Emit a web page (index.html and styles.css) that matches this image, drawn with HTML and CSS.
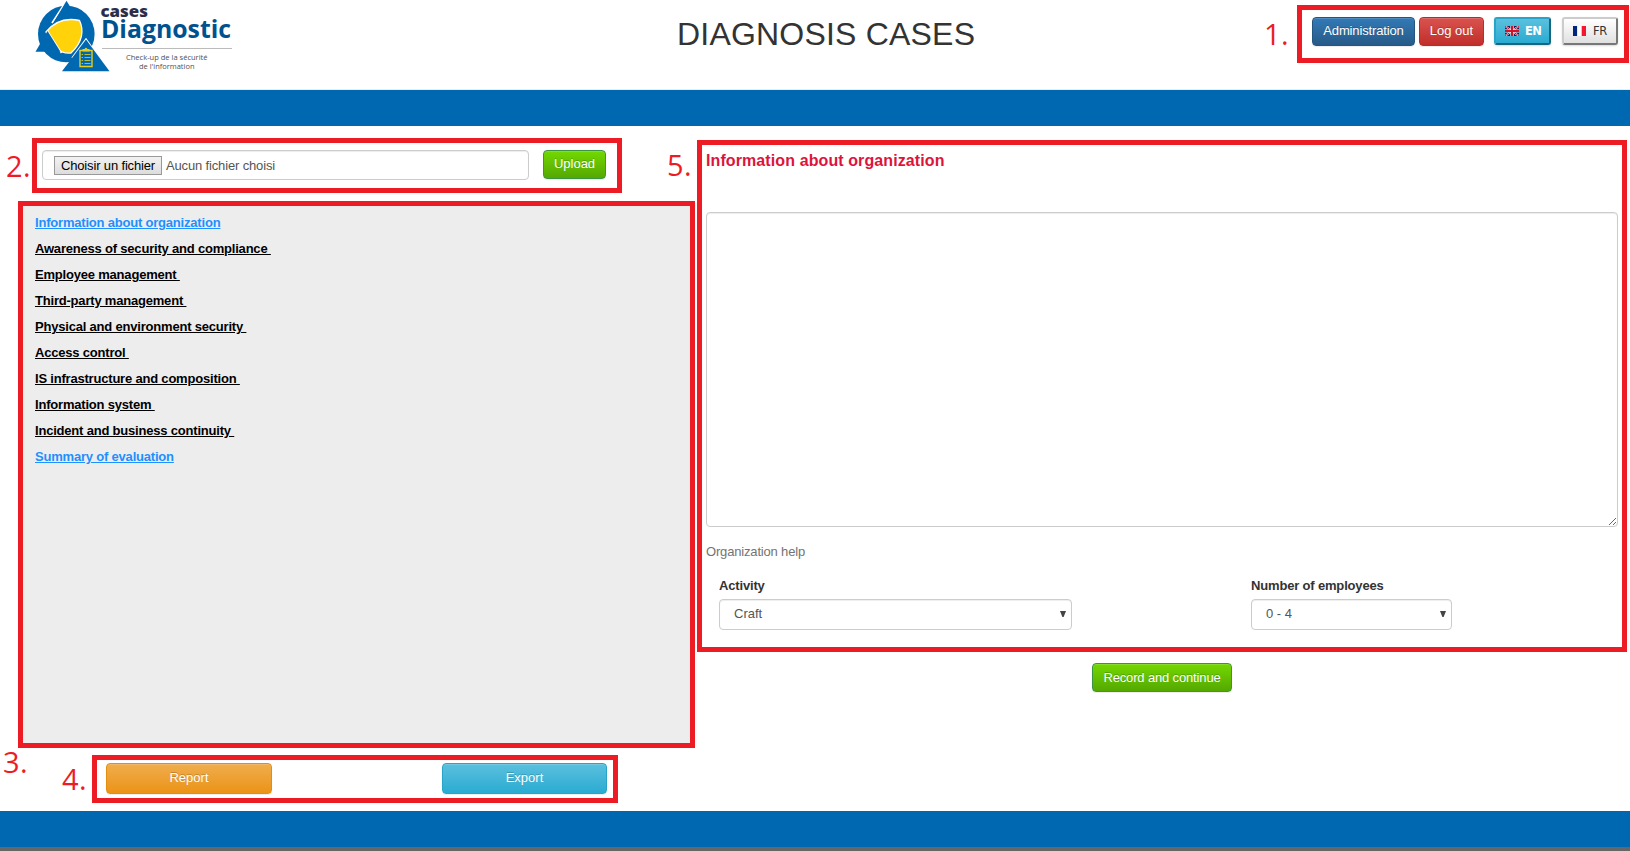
FILE: index.html
```html
<!DOCTYPE html>
<html lang="en">
<head>
<meta charset="utf-8">
<title>Diagnosis Cases</title>
<link rel="stylesheet" href="styles.css">
</head>
<body>
<header class="header">
  <svg class="logo" width="200" height="72" viewBox="35 0 200 72">
    <circle cx="66.300" cy="34" r="28.300" fill="#0067b1"/>
    <path d="M66.500 .8 52 23" stroke="#fff" stroke-width="1.600" fill="none"/>
    <path d="M66.500 .8 79.500 22 54 22Z" fill="#0067b1"/>
    <path d="M46 32C54 22 66 17.500 79.500 20.500 84 30 83 42 71 53 62 54 53 49 46 32Z" fill="#ffd20a" stroke="#fff" stroke-width="1.300"/>
    <path d="M47.500 31 61.500 53" stroke="#fff" stroke-width="1.400" fill="none"/>
    <path d="M47.500 31 60.500 51.800H35.500Z" fill="#0067b1"/>
    <path d="M98 56 86 39 72 58" stroke="#fff" stroke-width="1.400" fill="none"/>
    <path d="M86 39.500 109.500 71.200H62Z" fill="#0067b1"/>
    <path d="M80 50.500H92V66.500H80Z" fill="none" stroke="#e5cf20" stroke-width="1.400"/>
    <path d="M82.500 51.500V49H84.500Q86 46.500 87.500 49H89.500V51.500Z" fill="#e5cf20"/>
    <path d="M84.500 54.500H90.500M84.500 57.500H90.500M84.500 60.500H90.500M84.500 63.500H90.500M81.500 54.500H83M81.500 57.500H83M81.500 60.500H83M81.500 63.500H83" stroke="#e5cf20" stroke-width=".8"/>
    <text x="100.500" y="16.800" textLength="47.500" lengthAdjust="spacingAndGlyphs" class="logo-top">cases</text>
    <text x="101" y="38.300" textLength="130" lengthAdjust="spacingAndGlyphs" class="logo-name">Diagnostic</text>
    <path d="M102 48.500H232" stroke="#bbb"/>
    <text x="126" y="59.500" textLength="81.500" lengthAdjust="spacingAndGlyphs" class="logo-sub">Check-up de la sécurité</text>
    <text x="139" y="68.500" textLength="55.500" lengthAdjust="spacingAndGlyphs" class="logo-sub">de l'information</text>
  </svg>
  <h1 class="title">DIAGNOSIS CASES</h1>
  <div class="frame actions">
    <span class="num num-1">1.</span>
    <a class="btn btn-admin">Administration</a>
    <a class="btn btn-logout">Log out</a>
    <button class="lang lang-en">
      <svg width="14" height="10" viewBox="0 0 14 10"><path d="M0 0H14V10H0Z" fill="#14205c"/><path d="M0 0 14 10M14 0 0 10" stroke="#fff" stroke-width="1.800"/><path d="M0 0 14 10M14 0 0 10" stroke="#d3122c" stroke-width="1"/><path d="M7 0V10M0 5H14" stroke="#fff" stroke-width="3.200"/><path d="M7 0V10M0 5H14" stroke="#d3122c" stroke-width="2"/></svg>
      <span>EN</span>
    </button>
    <button class="lang lang-fr">
      <svg width="13" height="10" viewBox="0 0 13 10"><path d="M0 0H4.300V10H0Z" fill="#00267f"/><path d="M4.300 0H8.700V10H4.300Z" fill="#fff"/><path d="M8.700 0H13V10H8.700Z" fill="#f31830"/></svg>
      <span>FR</span>
    </button>
  </div>
</header>
<div class="bar bar-top"></div>
<main class="main">
  <section class="left">
    <div class="frame upload">
      <span class="num num-2">2.</span>
      <div class="file"><button class="choose">Choisir un fichier</button><span class="nofile">Aucun fichier choisi</span></div>
      <button class="btn btn-green btn-upload">Upload</button>
    </div>
    <nav class="frame menu">
      <span class="num num-3">3.</span>
      <a class="link active">Information about organization</a>
      <a class="link">Awareness of security and compliance&nbsp;</a>
      <a class="link">Employee management&nbsp;</a>
      <a class="link">Third-party management&nbsp;</a>
      <a class="link">Physical and environment security&nbsp;</a>
      <a class="link">Access control&nbsp;</a>
      <a class="link">IS infrastructure and composition&nbsp;</a>
      <a class="link">Information system&nbsp;</a>
      <a class="link">Incident and business continuity&nbsp;</a>
      <a class="link active">Summary of evaluation</a>
    </nav>
    <div class="frame exports">
      <span class="num num-4">4.</span>
      <a class="btn btn-report">Report</a>
      <a class="btn btn-export">Export</a>
    </div>
  </section>
  <section class="right">
    <div class="frame form">
      <span class="num num-5">5.</span>
      <h2 class="form-title">Information about organization</h2>
      <textarea class="area"></textarea>
      <p class="help">Organization help</p>
      <div class="fields">
        <div class="field field-activity">
          <label class="label">Activity</label>
          <div class="select"><span>Craft</span><svg width="6" height="6" viewBox="0 0 6 6"><path d="M0 0H6L3.600 6H2.400Z" fill="#444"/></svg></div>
        </div>
        <div class="field field-count">
          <label class="label">Number of employees</label>
          <div class="select"><span>0 - 4</span><svg width="6" height="6" viewBox="0 0 6 6"><path d="M0 0H6L3.600 6H2.400Z" fill="#444"/></svg></div>
        </div>
      </div>
    </div>
    <button class="btn btn-green btn-record">Record and continue</button>
  </section>
</main>
<footer class="bar bar-bottom"></footer>
</body>
</html>
```
FILE: styles.css
```css
* { box-sizing: border-box; }
body {
  margin: 0;
  width: 1630px;
  height: 851px;
  overflow: hidden;
  display: flex;
  flex-direction: column;
  background: #fff;
  color: #333;
  font: 13px/20px "Liberation Sans", Arial, sans-serif;
}
h1, h2, p { margin: 0; font-weight: normal; }
button { font-family: inherit; }

.header {
  height: 90px;
  flex: none;
  display: flex;
  align-items: flex-start;
  padding-left: 35px;
  border-bottom: 1px solid #e7eef2;
}
.logo { flex: none; overflow: visible; }
.logo text { font-family: "Open Sans", "Noto Sans", sans-serif; }
.logo .logo-top { font-size: 16.500px; font-weight: 800; fill: #2b2e4a; }
.logo .logo-name { font-size: 25px; font-weight: 700; fill: #00528f; }
.logo .logo-sub { font-size: 7.500px; fill: #505050; }
.title {
  margin: 17px 0 0 442px;
  width: 620px;
  font-size: 32px;
  line-height: 35px;
  letter-spacing: .200px;
}
.bar { flex: none; height: 36px; background: #0067b1; }
.bar-bottom { height: 40px; border-bottom: 4px solid #666; }

.frame { position: relative; border: 5px solid #ed1c24; }
.num {
  position: absolute;
  color: #ed1c24;
  font: 29px/30px "Open Sans", "Noto Sans", sans-serif;
  letter-spacing: .5px;
}
.num-1 { left: -38px; top: 9px; }
.num-2 { left: -31px; top: 8px; }
.num-3 { left: -20px; top: 541px; }
.num-4 { left: -35px; top: 4px; }
.num-5 { left: -35px; top: 5px; }

.btn {
  flex: none;
  display: block;
  border: 1px solid;
  border-radius: 4px;
  padding: 0;
  color: #fff;
  font-size: 13px;
  text-align: center;
  text-shadow: 0 -1px 0 rgba(0, 0, 0, .2);
  box-shadow: inset 0 1px 0 rgba(255, 255, 255, .15), 0 1px 1px rgba(0, 0, 0, .075);
}
.actions {
  flex: none;
  display: flex;
  width: 332px;
  height: 58px;
  margin-top: 5px;
  padding: 7px 0 0 10px;
}
.btn-admin, .btn-logout { height: 29px; line-height: 26px; }
.btn-admin { width: 103px; background: linear-gradient(#337ab7, #265a88); border-color: #245580; letter-spacing: -.140px; }
.btn-logout { width: 65px; margin-left: 4px; background: linear-gradient(#d9534f, #c12e2a); border-color: #b92c28; }
.lang {
  display: flex;
  flex: none;
  align-items: center;
  height: 28px;
  padding: 0 0 0 9px;
  border: 2px solid;
  border-radius: 3px;
  font: 11.500px/20px "DejaVu Sans", sans-serif;
  box-shadow: 0 1px 2px rgba(0, 0, 0, .15);
}
.lang-en {
  width: 57px;
  margin-left: 10px;
  gap: 6px;
  background: linear-gradient(#5bc0de, #2aabd2);
  border-color: #28a4c9 #17667d #17667d #28a4c9;
  color: #fff;
  font-weight: bold;
  letter-spacing: -.7px;
}
.lang-fr {
  width: 56px;
  margin-left: 11px;
  gap: 7px;
  background: linear-gradient(#fff, #e0e0e0);
  border-color: #ccc #777 #777 #ccc;
  color: #333;
  letter-spacing: -.300px;
}

.main { height: 685px; flex: none; display: flex; align-items: flex-start; padding-left: 18px; }
.left { width: 677px; margin-right: 2px; padding-top: 12px; }
.upload { display: flex; width: 590px; height: 55px; margin-left: 14px; padding: 7px 0 0 5px; }
.file {
  display: flex;
  width: 487px;
  height: 30px;
  padding: 5px 11px;
  border: 1px solid #ccc;
  border-radius: 4px;
  box-shadow: inset 0 1px 1px rgba(0, 0, 0, .075);
}
.choose {
  width: 108px;
  height: 19px;
  padding: 0;
  border: 1px solid #999;
  background: linear-gradient(#f2f2f2, #ddd);
  color: #000;
  font-size: 13px;
  line-height: 17px;
  letter-spacing: -.150px;
}
.nofile { margin-left: 4px; line-height: 19px; color: #555; letter-spacing: -.150px; }
.btn-green { height: 29px; line-height: 25px; background: linear-gradient(#73d800, #55a800); border-color: #3b9440; }
.btn-upload { width: 63px; margin-left: 14px; padding-bottom: 2px; }
.menu {
  display: flex;
  flex-direction: column;
  align-items: flex-start;
  height: 547px;
  margin-top: 8px;
  padding: 4px 0 0 12px;
  background: #ededed;
}
.link { line-height: 26px; color: #000; font-weight: bold; letter-spacing: -.200px; text-decoration: underline; }
.link.active { color: #1e90ff; }
.exports {
  display: flex;
  justify-content: space-between;
  width: 526px;
  height: 48px;
  margin: 7px 0 0 74px;
  padding: 3px 6px 0 9px;
}
.btn-report, .btn-export { height: 31px; line-height: 27px; }
.btn-report { width: 166px; background: linear-gradient(#f0ad4e, #eb9316); border-color: #e38d13; }
.btn-export { width: 165px; background: linear-gradient(#5bc0de, #2aabd2); border-color: #28a4c9; }

.right { width: 930px; padding-top: 14px; }
.form { height: 512px; padding: 6px 4px 0; }
.form-title { color: #dc143c; font-size: 16px; font-weight: bold; line-height: 20px; letter-spacing: .100px; }
.area {
  display: block;
  width: 912px;
  height: 315px;
  margin-top: 41px;
  border: 1px solid #ccc;
  border-radius: 4px;
  box-shadow: inset 0 1px 1px rgba(0, 0, 0, .075);
  outline: none;
}
.help { margin-top: 15px; color: #737373; letter-spacing: -.170px; }
.fields { display: flex; margin: 14px 0 0 13px; }
.label { display: block; font-weight: bold; letter-spacing: -.170px; }
.field-activity { width: 353px; }
.field-count { width: 201px; margin-left: 179px; }
.select {
  display: flex;
  align-items: center;
  justify-content: space-between;
  height: 31px;
  margin-top: 3px;
  padding: 0 5px 2px 14px;
  border: 1px solid #ccc;
  border-radius: 4px;
  color: #555;
  box-shadow: inset 0 1px 1px rgba(0, 0, 0, .075);
}
.btn-record { width: 140px; margin: 11px 0 0 395px; letter-spacing: -.150px; }
```
